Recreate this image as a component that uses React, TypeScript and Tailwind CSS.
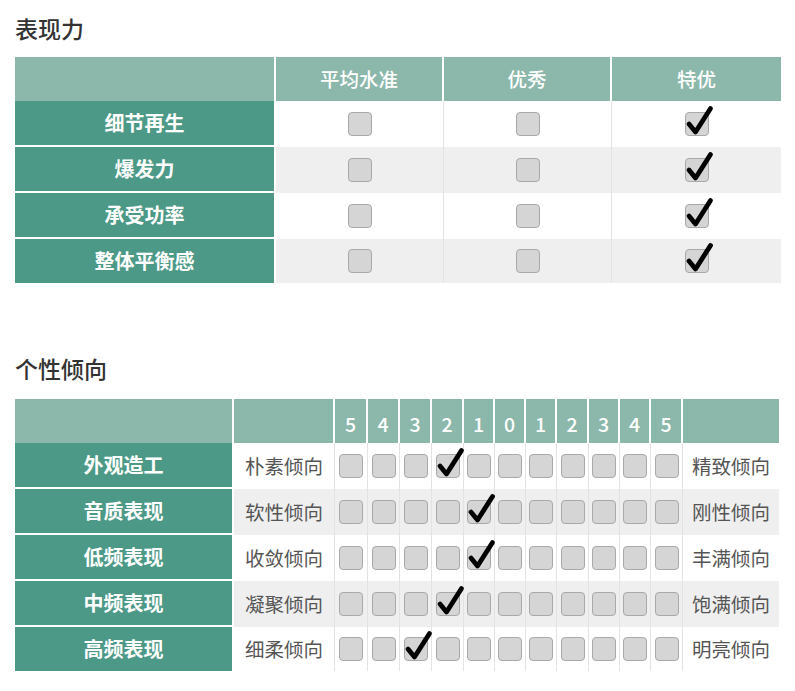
const font = { fontFamily: '"Noto Sans CJK SC", "Noto Sans", sans-serif' };

function Box({ checked }: { checked?: boolean }) {
  return (
    <div className="relative h-[24px] w-[24px] rounded-[4px] border border-[#a9a9a9] bg-[#d5d5d5]">
      {checked && (
        <svg
          className="absolute left-[-1px] top-[-9px]"
          width="30"
          height="34"
          viewBox="0 0 30 34"
        >
          <path
            d="M4 20 L10.5 28 L25.5 4.5"
            fill="none"
            stroke="#000"
            strokeWidth="4.8"
            strokeLinecap="round"
            strokeLinejoin="round"
          />
        </svg>
      )}
    </div>
  );
}

const perfRows = ["细节再生", "爆发力", "承受功率", "整体平衡感"];
const perfCols = [
  { name: "平均水准", w: "w-[168px]" },
  { name: "优秀", w: "w-[168px]" },
  { name: "特优", w: "w-[169px]" },
];

const scale = ["5", "4", "3", "2", "1", "0", "1", "2", "3", "4", "5"];
const scaleW = [
  "w-[33px]", "w-[32px]", "w-[32px]", "w-[32px]", "w-[31px]", "w-[31px]",
  "w-[31px]", "w-[32px]", "w-[31px]", "w-[31px]", "w-[32px]",
];
const traits = [
  { name: "外观造工", left: "朴素倾向", right: "精致倾向", pick: 3 },
  { name: "音质表现", left: "软性倾向", right: "刚性倾向", pick: 4 },
  { name: "低频表现", left: "收敛倾向", right: "丰满倾向", pick: 4 },
  { name: "中频表现", left: "凝聚倾向", right: "饱满倾向", pick: 3 },
  { name: "高频表现", left: "细柔倾向", right: "明亮倾向", pick: 2 },
];

export default function App() {
  return (
    <div className="min-h-screen bg-white px-[15px] pt-[12px]" style={font}>
      <h2 className="h-[32px] text-[23px] font-medium leading-[32px] text-[#333]">表现力</h2>

      <div className="mt-[13px] w-[766px]">
        <div className="flex h-[44px] bg-[#8cb8ab] text-[19.5px] font-medium text-white">
          <div className="w-[261px] border-r-2 border-white" />
          {perfCols.map((c, i) => (
            <div
              key={c.name}
              className={`${c.w} flex items-center justify-center ${i < 2 ? "border-r-2 border-white" : ""}`}
            >
              {c.name}
            </div>
          ))}
        </div>
        {perfRows.map((r, ri) => (
          <div
            key={r}
            className={`flex ${ri === 3 ? "h-[44px]" : "h-[46px]"} ${ri % 2 ? "bg-[#efefef]" : "bg-white"}`}
          >
            <div
              className={`flex w-[259px] items-center justify-center bg-[#4c9987] text-[20px] font-bold text-white ${ri === 3 ? "" : "border-b-2 border-white"}`}
            >
              {r}
            </div>
            <div className="w-[2px] bg-white" />
            {perfCols.map((c, i) => (
              <div
                key={c.name}
                className={`${c.w} flex items-center justify-center ${i < 2 ? "border-r border-[#e3e3e3]" : ""}`}
              >
                <Box checked={i === 2} />
              </div>
            ))}
          </div>
        ))}
      </div>

      <h2 className="mt-[69px] h-[32px] text-[23px] font-medium leading-[32px] text-[#333]">个性倾向</h2>

      <div className="mt-[15px] w-[764px]">
        <div className="flex h-[44px] bg-[#8cb8ab] text-[19.5px] font-medium text-white">
          <div className="w-[219px] border-r-2 border-white" />
          <div className="w-[101px] border-r-2 border-white" />
          {scale.map((s, i) => (
            <div
              key={i}
              className={`${scaleW[i]} flex items-end justify-center border-r-2 border-white pb-[5px]`}
            >
              {s}
            </div>
          ))}
          <div className="flex-1" />
        </div>
        {traits.map((t, ri) => (
          <div
            key={t.name}
            className={`flex ${ri === 4 ? "h-[44px]" : "h-[46px]"} ${ri % 2 ? "bg-[#efefef]" : "bg-white"}`}
          >
            <div
              className={`flex w-[217px] items-center justify-center bg-[#4c9987] text-[20px] font-bold text-white ${ri === 4 ? "" : "border-b-2 border-white"}`}
            >
              {t.name}
            </div>
            <div className="w-[2px] bg-white" />
            <div className="flex w-[101px] items-center justify-center border-r border-[#e3e3e3] text-[19.5px] text-[#555]">
              {t.left}
            </div>
            {scale.map((_, i) => (
              <div
                key={i}
                className={`${scaleW[i]} flex items-center justify-center border-r border-[#e3e3e3]`}
              >
                <Box checked={i === t.pick} />
              </div>
            ))}
            <div className="flex flex-1 items-center justify-center text-[19.5px] text-[#555]">
              {t.right}
            </div>
          </div>
        ))}
      </div>
    </div>
  );
}
